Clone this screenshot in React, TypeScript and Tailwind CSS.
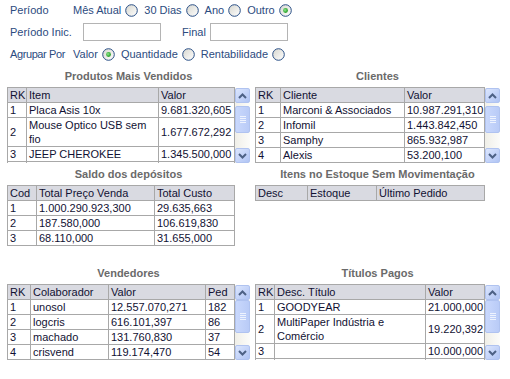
import React from "react";

const Radio = ({ checked = false }: { checked?: boolean }) => (
  <svg width="13" height="13" viewBox="0 0 13 13" className="shrink-0">
    <defs>
      <linearGradient id="rbg" x1="0" y1="0" x2="1" y2="1">
        <stop offset="0" stopColor="#d6d6ce" />
        <stop offset="1" stopColor="#ffffff" />
      </linearGradient>
      <radialGradient id="rdot" cx="0.4" cy="0.4" r="0.6">
        <stop offset="0" stopColor="#8ee88e" />
        <stop offset="1" stopColor="#1f9a1f" />
      </radialGradient>
    </defs>
    <circle cx="6.5" cy="6.5" r="5.8" fill="url(#rbg)" stroke="#2a4f86" strokeWidth="1" />
    {checked && <circle cx="6.5" cy="6.5" r="2.4" fill="url(#rdot)" />}
  </svg>
);

const ArrowBtn = ({ dir }: { dir: "up" | "down" }) => (
  <div className="w-[15px] h-[15px] rounded-[2px] border border-[#b0c3f0] bg-gradient-to-br from-[#dce6fd] to-[#b0c4f4] flex items-center justify-center">
    <svg width="9" height="6" viewBox="0 0 9 6">
      {dir === "up" ? (
        <path d="M1 5 L4.5 1.5 L8 5" fill="none" stroke="#4d6185" strokeWidth="2" />
      ) : (
        <path d="M1 1 L4.5 4.5 L8 1" fill="none" stroke="#4d6185" strokeWidth="2" />
      )}
    </svg>
  </div>
);

const ScrollBar = ({ thumbTop, thumbH }: { thumbTop: number; thumbH: number }) => (
  <div className="w-[15px] h-full flex flex-col bg-gradient-to-r from-[#f0efe8] to-[#fcfcfa]">
    <ArrowBtn dir="up" />
    <div className="flex-1 relative">
      <div
        className="absolute left-0 w-[15px] rounded-[2px] border border-[#b0c3f0] bg-gradient-to-r from-[#c9d8fc] to-[#b9cbf7] flex flex-col items-center justify-center gap-[1px]"
        style={{ top: thumbTop, height: thumbH }}
      >
        <div className="w-[6px] h-[1px] bg-[#eef3fe]" />
        <div className="w-[6px] h-[1px] bg-[#eef3fe]" />
        <div className="w-[6px] h-[1px] bg-[#eef3fe]" />
        <div className="w-[6px] h-[1px] bg-[#eef3fe]" />
      </div>
    </div>
    <ArrowBtn dir="down" />
  </div>
);

type Cell = React.ReactNode;

const Table = ({
  widths,
  head,
  rows,
  total,
}: {
  widths: number[];
  head: string[];
  rows: Cell[][];
  total: number;
}) => (
  <table
    className="border-collapse table-fixed text-[11px] leading-[14px] text-[#111133]"
    style={{ width: total }}
  >
    <colgroup>
      {widths.map((w, i) => (
        <col key={i} style={{ width: w }} />
      ))}
    </colgroup>
    <thead>
      <tr className="bg-[#d9dae1]">
        {head.map((h, i) => (
          <th
            key={i}
            className="border border-[#a8a8a8] font-normal text-left px-[2px] py-0 whitespace-nowrap overflow-hidden"
          >
            {h}
          </th>
        ))}
      </tr>
    </thead>
    <tbody>
      {rows.map((r, i) => (
        <tr key={i} className="bg-white">
          {r.map((c, j) => (
            <td key={j} className="border border-[#a8a8a8] px-[2px] py-0 h-[15px] align-middle whitespace-nowrap overflow-hidden">
              {c}
            </td>
          ))}
        </tr>
      ))}
    </tbody>
  </table>
);

const Title = ({ children }: { children: React.ReactNode }) => (
  <div className="h-[15px] leading-[15px] text-center font-bold text-[11px] text-[#6a6a6a] whitespace-nowrap">{children}</div>
);

export default function App() {
  return (
    <div className="w-[510px] h-[379px] bg-white overflow-hidden font-['Liberation_Sans',Arial,sans-serif] text-[11px]">
      {/* form */}
      <div className="pl-[10px] text-[#2c4b80]">
        <div className="h-[20px] flex items-center">
          <div className="w-[63px]">Período</div>
          <span>Mês Atual</span>
          <span className="ml-[4px] mr-[6px]"><Radio /></span>
          <span>30 Dias</span>
          <span className="ml-[4px] mr-[6px]"><Radio /></span>
          <span>Ano</span>
          <span className="ml-[4px] mr-[6px]"><Radio /></span>
          <span>Outro</span>
          <span className="ml-[4px]"><Radio checked /></span>
        </div>
        <div className="h-[22px] flex items-center mt-[1px]">
          <div className="w-[73px]">Período Inic.</div>
          <div className="w-[78px] h-[18px] border border-[#b4b4b4] bg-white" />
          <div className="ml-[21px] w-[28px]">Final</div>
          <div className="w-[78px] h-[18px] border border-[#b4b4b4] bg-white" />
        </div>
        <div className="h-[22px] flex items-center">
          <div className="w-[63px] tracking-[-0.4px] whitespace-nowrap">Agrupar Por</div>
          <span>Valor</span>
          <span className="ml-[4px] mr-[6px]"><Radio checked /></span>
          <span>Quantidade</span>
          <span className="ml-[4px] mr-[6px]"><Radio /></span>
          <span>Rentabilidade</span>
          <span className="ml-[4px]"><Radio /></span>
        </div>
      </div>

      {/* panels */}
      <div className="pl-[7px] mt-[4px] grid grid-cols-[243px_245px] gap-x-[5px]">
        {/* row 1 */}
        <div>
          <Title>Produtos Mais Vendidos</Title>
          <div className="mt-[3px] h-[76px] flex justify-between">
            <div className="h-[76px] overflow-hidden">
              <Table
                total={227}
                widths={[19, 132, 76]}
                head={["RK", "Item", "Valor"]}
                rows={[
                  ["1", "Placa Asis 10x", "9.681.320,605"],
                  ["2", <>Mouse Optico USB sem<br />fio</>, "1.677.672,292"],
                  ["3", "JEEP CHEROKEE", "1.345.500,000"],
                  ["", "", ""],
                ]}
              />
            </div>
            <div className="h-[76px] pt-[1px]">
              <ScrollBar thumbTop={3} thumbH={27} />
            </div>
          </div>
        </div>
        <div>
          <Title>Clientes</Title>
          <div className="mt-[3px] h-[76px] flex justify-between">
            <div className="h-[76px] overflow-hidden">
              <Table
                total={229}
                widths={[25, 124, 80]}
                head={["RK", "Cliente", "Valor"]}
                rows={[
                  ["1", "Marconi & Associados", "10.987.291,310"],
                  ["2", "Infomil", "1.443.842,450"],
                  ["3", "Samphy", "865.932,987"],
                  ["4", "Alexis", "53.200,100"],
                ]}
              />
            </div>
            <div className="h-[76px] pt-[1px]">
              <ScrollBar thumbTop={3} thumbH={27} />
            </div>
          </div>
        </div>

        {/* row 2 */}
        <div className="mt-[4px]">
          <Title>Saldo dos depósitos</Title>
          <div className="mt-[3px]">
            <Table
              total={227}
              widths={[29, 118, 80]}
              head={["Cod", "Total Preço Venda", "Total Custo"]}
              rows={[
                ["1", "1.000.290.923,300", "29.635,663"],
                ["2", "187.580,000", "106.619,830"],
                ["3", "68.110,000", "31.655,000"],
              ]}
            />
          </div>
        </div>
        <div className="mt-[4px]">
          <Title>Itens no Estoque Sem Movimentação</Title>
          <div className="mt-[3px]">
            <Table
              total={229}
              widths={[52, 69, 108]}
              head={["Desc", "Estoque", "Último Pedido"]}
              rows={[]}
            />
          </div>
        </div>

        {/* row 3 */}
        <div className="mt-[20px]">
          <Title>Vendedores</Title>
          <div className="mt-[3px] h-[76px] flex justify-between">
            <div className="h-[76px] overflow-hidden">
              <Table
                total={227}
                widths={[23, 78, 97, 29]}
                head={["RK", "Colaborador", "Valor", "Ped"]}
                rows={[
                  ["1", "unosol", "12.557.070,271", "182"],
                  ["2", "logcris", "616.101,397", "86"],
                  ["3", "machado", "131.760,830", "37"],
                  ["4", "crisvend", "119.174,470", "54"],
                ]}
              />
            </div>
            <div className="h-[76px] pt-[1px]">
              <ScrollBar thumbTop={0} thumbH={33} />
            </div>
          </div>
        </div>
        <div className="mt-[20px]">
          <Title>Títulos Pagos</Title>
          <div className="mt-[3px] h-[76px] flex justify-between">
            <div className="h-[76px] overflow-hidden">
              <Table
                total={229}
                widths={[19, 151, 59]}
                head={["RK", "Desc. Título", "Valor"]}
                rows={[
                  ["1", "GOODYEAR", "21.000,000"],
                  ["2", <>MultiPaper Indústria e<br />Comércio</>, "19.220,392"],
                  ["3", "", "10.000,000"],
                  ["", "", ""],
                ]}
              />
            </div>
            <div className="h-[76px] pt-[1px]">
              <ScrollBar thumbTop={0} thumbH={33} />
            </div>
          </div>
        </div>
      </div>
    </div>
  );
}
